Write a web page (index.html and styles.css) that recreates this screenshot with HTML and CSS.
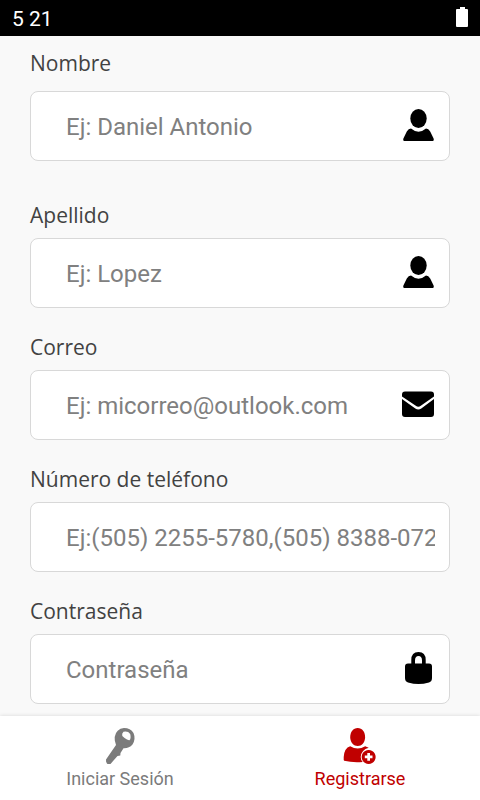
FILE: index.html
```html
<!DOCTYPE html>
<html lang="es">
<head>
<meta charset="utf-8">
<meta name="viewport" content="width=device-width, initial-scale=1">
<title>Registrarse</title>
<link rel="stylesheet" href="styles.css">
</head>
<body>
<header class="status">
  <span>5 21</span>
  <svg class="battery" viewBox="0 0 12 20" aria-hidden="true"><path d="M4 0h5v2h2q1 0 1 1v16q0 1-1 1H1q-1 0-1-1V3q0-1 1-1h3z"/></svg>
</header>
<main class="content">
  <form class="form">
    <div class="field field-spaced">
      <label for="nombre">Nombre</label>
      <div class="box">
        <input id="nombre" type="text" placeholder="Ej: Daniel Antonio">
        <svg class="icon" viewBox="0 0 32 32" aria-hidden="true"><ellipse cx="16.5" cy="9.5" rx="8.2" ry="9.5"/><path d="M9 19.6Q16.500 26 24 19.600Q26.500 19.800 28.200 22.500L31.600 29.500Q32.300 32 30.500 32H2.500Q.7 32 1.400 29.500L4.800 22.500Q6.500 19.800 9 19.600z"/></svg>
      </div>
    </div>
    <div class="field">
      <label for="apellido">Apellido</label>
      <div class="box">
        <input id="apellido" type="text" placeholder="Ej: Lopez">
        <svg class="icon" viewBox="0 0 32 32" aria-hidden="true"><ellipse cx="16.5" cy="9.5" rx="8.2" ry="9.5"/><path d="M9 19.6Q16.500 26 24 19.600Q26.500 19.800 28.200 22.500L31.600 29.500Q32.300 32 30.500 32H2.500Q.7 32 1.400 29.500L4.800 22.500Q6.500 19.800 9 19.600z"/></svg>
      </div>
    </div>
    <div class="field">
      <label for="correo">Correo</label>
      <div class="box">
        <input id="correo" type="email" placeholder="Ej: micorreo@outlook.com">
        <svg class="icon" viewBox="0 0 32 32" aria-hidden="true"><path d="M3 3.500H29Q32 3.500 32 6.500V8.600L18.800 17.800Q16.300 19.600 13.800 17.800L0 8.600V6.500Q0 3.500 3 3.500z"/><path d="M0 11L13.300 20.500Q16.300 22.700 19.300 20.500L32 11V26Q32 29 29 29H3Q0 29 0 26z"/></svg>
      </div>
    </div>
    <div class="field">
      <label for="telefono">Número de teléfono</label>
      <div class="box">
        <input id="telefono" type="tel" placeholder="Ej:(505) 2255-5780,(505) 8388-0721">
      </div>
    </div>
    <div class="field">
      <label for="clave">Contraseña</label>
      <div class="box">
        <input id="clave" type="password" placeholder="Contraseña">
        <svg class="icon" viewBox="0 0 32 32" aria-hidden="true"><path fill-rule="evenodd" d="M9.300 11.500V8Q9.300 0 16.500 0T23.700 8V11.500H27Q30 11.500 30 14.500V26Q30 29.500 27 30.500Q21.500 32 16.500 32T6 30.500Q3 29.500 3 26V14.500Q3 11.500 6 11.500zM13 11.500H20V8.500Q20 4 16.500 4T13 8.500z"/></svg>
      </div>
    </div>
  </form>
</main>
<nav class="tabs">
  <a class="tab" href="#iniciar">
    <svg class="tab-icon" viewBox="0 0 36 36" aria-hidden="true"><path fill-rule="evenodd" d="M22 0Q28.500 0 31.500 5Q34 11 30.500 16.500Q27 20.500 21.500 20.200L18.500 25L18.300 27.500L15.500 28L11.500 32.500L8.500 36H5.500Q3.500 34.500 4 31.500L14 17L12.800 12.500Q12 4 18.500 .8zM21.500 3.800Q26 2.800 28.200 6Q29.300 10.500 27.500 12.300Q25.500 12.500 20.300 8Q19.500 5.500 21.500 3.800z"/></svg>
    <span>Iniciar Sesión</span>
  </a>
  <a class="tab active" href="#registrarse" aria-current="page">
    <svg class="tab-icon" viewBox="0 0 36 36" aria-hidden="true"><path d="M15.700 0C20.200 0 23.200 4 23.100 9.500C22.900 14.500 19.700 18 15.700 18S8.500 14.500 8.200 9.500C8.100 4 11.200 0 15.700 0z"/><path d="M8.200 18.200Q15.700 23 23.200 18.200L26.700 19.800Q19.500 21.500 18.700 29Q18.700 32 20.700 34Q10.200 34.800 2.200 32.800Q1.500 32.500 1.700 29Q2.200 20 8.200 18.200z"/><path fill-rule="evenodd" d="M26.700 22A7 7 0 1 1 26.600 22zM25.300 25V27.500H22.800V30.300H25.300V32.800H28V30.300H30.500V27.500H28V25z"/></svg>
    <span>Registrarse</span>
  </a>
</nav>
</body>
</html>
```
FILE: styles.css
```css
* {
  box-sizing: border-box;
}

body {
  margin: 0;
  height: 100vh;
  display: flex;
  flex-direction: column;
  background: #f9f9f9;
  color: #424242;
  font-family: Roboto, "Noto Sans", sans-serif;
}

.status {
  flex: none;
  display: flex;
  align-items: center;
  justify-content: space-between;
  height: 36px;
  padding: 0 12px;
  background: #000;
  color: #fff;
  font-size: 21px;
  line-height: 34px;
}

.status span {
  padding-top: 2px;
}

.battery {
  width: 12px;
  height: 20px;
  margin-bottom: 2px;
  fill: #fff;
}

.content {
  flex: 1;
  min-height: 0;
  overflow: hidden;
}

.form {
  display: flex;
  flex-direction: column;
  gap: 24px;
  padding: 12px 30px;
}

.field {
  display: flex;
  flex-direction: column;
  gap: 8px;
}

.field-spaced {
  gap: 13px;
  margin-bottom: 15px;
}

.field label {
  font-family: "Open Sans", "Noto Sans", sans-serif;
  font-size: 21px;
  line-height: 30px;
}

.box {
  display: flex;
  align-items: center;
  height: 70px;
  padding: 0 14px 0 35px;
  border: 1px solid #d8d8d8;
  border-radius: 8px;
  background: #fff;
}

.box input {
  flex: 1;
  min-width: 0;
  height: 68px;
  padding: 2px 0 0;
  border: 0;
  outline: 0;
  background: none;
  color: #212121;
  font-family: Roboto, sans-serif;
  font-size: 24px;
}

.box input::placeholder {
  color: #808080;
  opacity: 1;
}

.icon {
  flex: none;
  width: 32px;
  height: 32px;
  margin: 0 1px 2px 0;
}

.tabs {
  flex: none;
  display: flex;
  height: 84px;
  background: #fff;
  box-shadow: 0 0 4px rgba(0, 0, 0, 0.14);
}

.tab {
  flex: 1;
  display: flex;
  flex-direction: column;
  align-items: center;
  gap: 4px;
  padding-top: 12px;
  color: #7b7b7b;
  font-size: 18px;
  line-height: 22px;
  text-decoration: none;
}

.tab.active {
  color: #c00000;
}

.tab-icon {
  width: 36px;
  height: 36px;
  fill: currentColor;
}
```
